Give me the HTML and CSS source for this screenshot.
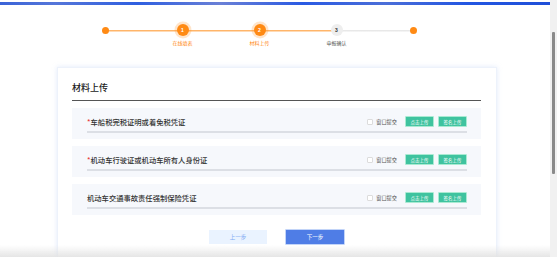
FILE: index.html
```html
<!DOCTYPE html>
<html lang="zh">
<head>
<meta charset="utf-8">
<title>材料上传</title>
<link rel="stylesheet" href="styles.css">
</head>
<body>
<div class="page">
  <div class="main">
    <div class="topbar"></div>
    <div class="steps">
      <div class="step">
        <div class="node"><span class="dot"></span></div>
      </div>
      <div class="step">
        <div class="node"><span class="circle active">1</span></div>
        <div class="label active">在线填表</div>
      </div>
      <div class="step">
        <div class="node"><span class="circle active">2</span></div>
        <div class="label active">材料上传</div>
      </div>
      <div class="step">
        <div class="node"><span class="circle">3</span></div>
        <div class="label">申报确认</div>
      </div>
      <div class="step">
        <div class="node"><span class="dot"></span></div>
      </div>
    </div>
    <div class="card">
      <div class="card-title">材料上传</div>
      <div class="rows">
        <div class="row">
          <div class="row-inner">
            <div class="name"><span class="req">*</span>车船税完税证明或着免税凭证</div>
            <div class="actions">
              <span class="check"></span><span class="check-label">窗口提交</span>
              <span class="btn">点击上传</span><span class="btn">签名上传</span>
            </div>
          </div>
        </div>
        <div class="row">
          <div class="row-inner">
            <div class="name"><span class="req">*</span>机动车行驶证或机动车所有人身份证</div>
            <div class="actions">
              <span class="check"></span><span class="check-label">窗口提交</span>
              <span class="btn">点击上传</span><span class="btn">签名上传</span>
            </div>
          </div>
        </div>
        <div class="row">
          <div class="row-inner">
            <div class="name">机动车交通事故责任强制保险凭证</div>
            <div class="actions">
              <span class="check"></span><span class="check-label">窗口提交</span>
              <span class="btn">点击上传</span><span class="btn">签名上传</span>
            </div>
          </div>
        </div>
      </div>
      <div class="footer-btns">
        <span class="nav prev">上一步</span>
        <span class="nav next">下一步</span>
      </div>
    </div>
  </div>
  <div class="scrollbar"><div class="thumb"></div></div>
</div>
<div class="fade"></div>
</body>
</html>
```

FILE: styles.css
```css
html, body {
  margin: 0;
  padding: 0;
  background: #ffffff;
  font-family: "Noto Sans CJK SC", "Noto Sans", sans-serif;
  overflow: hidden;
}
.page {
  display: flex;
  width: 557px;
  height: 257px;
  overflow: hidden;
}
.main {
  width: 550px;
  flex: none;
}
.scrollbar {
  flex: 1;
  background: #f1f1f1;
  padding: 32px 2px 0 2px;
}
.thumb {
  width: 3px;
  height: 142px;
  background: #8a8a8a;
  border-radius: 1px;
}
.topbar {
  margin-top: 2px;
  height: 3px;
  background: linear-gradient(90deg, #3a63d8 0%, #5576d9 10%, #2f5fe0 25%, #6a80d6 40%, #2a5ae3 55%, #4b6ed8 70%, #2356e2 85%, #1f4fd8 100%);
}
.steps {
  display: flex;
  margin-left: 67px;
  padding-top: 18px;
  height: 42px;
  background:
    linear-gradient(#ffb56a, #ffb56a) no-repeat 38px 24.5px / 231px 1.5px,
    linear-gradient(#e8e8e8, #e8e8e8) no-repeat 269px 24.5px / 77px 1.5px;
}
.step {
  width: 77px;
  display: flex;
  flex-direction: column;
  align-items: center;
}
.node {
  height: 14px;
  display: flex;
  align-items: center;
  justify-content: center;
}
.dot {
  width: 7px;
  height: 7px;
  border-radius: 50%;
  background: #ff8a14;
}
.circle {
  width: 12px;
  height: 12px;
  border-radius: 50%;
  background: #eeeeee;
  color: #333;
  font-size: 5px;
  font-weight: 700;
  line-height: 12px;
  text-align: center;
  font-family: "Liberation Sans", sans-serif;
}
.circle.active {
  background: #ff8a14;
  color: #fff;
  box-shadow: 0 0 0 2.5px rgba(255, 138, 20, 0.22);
}
.label {
  margin-top: 3px;
  font-size: 5px;
  line-height: 6px;
  color: #555;
}
.label.active {
  color: #ff8a14;
}
.card {
  margin-left: 57px;
  width: 409px;
  padding: 15px 15px 20px 14px;
  margin-top: 2px;
  border: 1px solid #edf2fb;
  border-bottom: none;
  box-shadow: 0 0 5px rgba(170, 195, 240, 0.35);
  background: #fff;
  min-height: 160px;
}
.card-title {
  font-size: 9px;
  line-height: 10px;
  font-weight: 500;
  color: #222;
  padding-bottom: 7px;
  border-bottom: 1px solid #555;
}
.rows {
  display: flex;
  flex-direction: column;
  gap: 7px;
  margin-top: 7px;
}
.row {
  background: #f6f8fc;
  padding: 6px 14px 6px 15px;
}
.row-inner {
  display: flex;
  align-items: center;
  justify-content: space-between;
  height: 15px;
  padding-bottom: 2px;
  border-bottom: 2px solid #dcdfe5;
}
.name {
  font-size: 7.3px;
  color: #333;
  font-weight: 500;
}
.req {
  color: #e83a3a;
}
.actions {
  display: flex;
  align-items: center;
}
.check {
  width: 4px;
  height: 4px;
  border: 0.7px solid #dcdcdc;
  background: #fff;
  border-radius: 1px;
  margin-right: 3px;
}
.check-label {
  font-size: 5.2px;
  color: #555;
  margin-right: 4px;
}
.btn {
  width: 29px;
  height: 11px;
  box-sizing: border-box;
  background: #3fc39f;
  border: 0.7px solid #a9ead2;
  border-radius: 1px;
  color: #fff;
  font-size: 4.5px;
  line-height: 10px;
  text-align: center;
  margin-left: 4px;
}
.btn:first-of-type {
  margin-left: 0;
}
.footer-btns {
  display: flex;
  justify-content: center;
  gap: 19px;
  margin-top: 15px;
}
.nav {
  width: 58px;
  height: 14px;
  font-size: 5.5px;
  line-height: 14px;
  text-align: center;
}
.prev {
  background: #eaf3ff;
  color: #7eaaf3;
}
.next {
  background: #4f7de6;
  color: #fff;
  box-shadow: 0 0 0 0.7px #a9c2f5;
}
.fade {
  position: fixed;
  left: 0;
  right: 7px;
  bottom: 0;
  height: 12px;
  background: linear-gradient(rgba(235, 235, 235, 0), rgba(225, 225, 225, 0.85));
}
```
